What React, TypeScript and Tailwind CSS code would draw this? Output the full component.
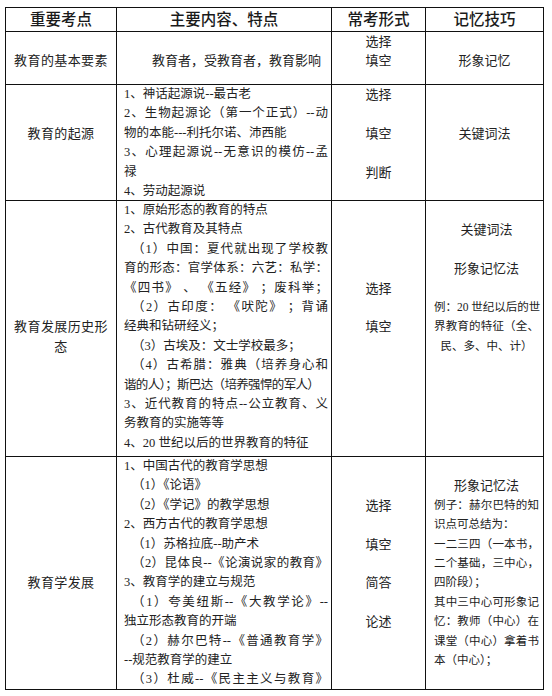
import React from 'react';

type Ln = { t: string; c?: string };
type Item = string | Ln;

const FONT = '"Liberation Serif", "Noto Sans CJK SC", serif';
const LINE = 'h-[19.4px] leading-[19.4px] whitespace-nowrap';
const J = 'text-justify [text-align-last:justify]';
const IN = 'pl-[8px]';
const SM = 'text-[11.5px]';

// one table cell = a stack of fixed-height lines, blanks keep the line grid
function Cell({ lines, className }: { lines: Item[]; className?: string }) {
  return (
    <div className={`border-r border-b border-[#111] overflow-visible ${className ?? ''}`}>
      {lines.map((l, i) => {
        const ln = typeof l === 'string' ? { t: l } : l;
        return (
          <div key={i} className={`${LINE} ${ln.c ?? ''}`}>
            {ln.t || '\u00a0'}
          </div>
        );
      })}
    </div>
  );
}

function Head({ children }: { children: React.ReactNode }) {
  return (
    <div className="flex items-center justify-center border-r border-b border-[#111] text-[15.5px] font-medium text-[#1a1a1a]">
      {children}
    </div>
  );
}

const side = 'text-center text-[13px] tracking-[0.4px]';
const mid = 'text-center text-[13px]';
const body = 'pl-[7px] pr-[3px] text-[12.5px]';
const tip = 'pl-[8px] pr-[4px] text-[13px]';

export default function App() {
  return (
    <div className="min-h-[696px] w-[552px] bg-white pl-[5px] pt-[7px]" style={{ fontFamily: FONT }}>
      <div className="grid w-[539px] grid-cols-[111px_215px_94px_118px] grid-rows-[24px_53px_116px_256px_233px] border-l border-t border-[#111] text-[#222]">
        {/* header */}
        <Head>重要考点</Head>
        <Head>主要内容、特点</Head>
        <Head>常考形式</Head>
        <Head>记忆技巧</Head>

        {/* 基本要素 */}
        <Cell className={side} lines={['', '教育的基本要素']} />
        <Cell className="pl-[35px] text-[13px]" lines={['', '教育者，受教育者，教育影响']} />
        <Cell className={mid} lines={['选择', '填空']} />
        <Cell className={mid} lines={['', '形象记忆']} />

        {/* 起源 */}
        <Cell className={side} lines={['', '', '教育的起源']} />
        <Cell
          className={body}
          lines={[
            '1、神话起源说--最古老',
            { t: '2、生物起源论（第一个正式）--动', c: J },
            '物的本能---利托尔诺、沛西能',
            { t: '3、心理起源说--无意识的模仿--孟', c: J },
            '禄',
            '4、劳动起源说',
          ]}
        />
        <Cell className={mid} lines={['选择', '', '填空', '', '判断']} />
        <Cell className={mid} lines={['', '', '关键词法']} />

        {/* 历史形态 */}
        <Cell className={side} lines={['', '', '', '', '', '', '教育发展历史形', '态']} />
        <Cell
          className={body}
          lines={[
            '1、原始形态的教育的特点',
            '2、古代教育及其特点',
            { t: '（1）中国：夏代就出现了学校教', c: `${IN} ${J}` },
            { t: '育的形态：官学体系：六艺：私学：', c: J },
            { t: '《四书》 、 《五经》 ；废科举；', c: J },
            { t: '（2）古印度： 《吠陀》 ；背诵', c: `${IN} ${J}` },
            '经典和钻研经义；',
            { t: '（3）古埃及：文士学校最多；', c: IN },
            { t: '（4）古希腊：雅典（培养身心和', c: `${IN} ${J}` },
            { t: '谐的人）；斯巴达（培养强悍的军人）', c: 'tracking-[-0.65px]' },
            { t: '3、近代教育的特点--公立教育、义', c: J },
            '务教育的实施等等',
            '4、20 世纪以后的世界教育的特征',
          ]}
        />
        <Cell className={mid} lines={['', '', '', '', '选择', '', '填空']} />
        <Cell
          className={tip}
          lines={[
            '',
            { t: '关键词法', c: 'text-center' },
            '',
            { t: '形象记忆法', c: 'text-center' },
            '',
            { t: '例：20 世纪以后的世', c: `${SM} ${J}` },
            { t: '界教育的特征（全、', c: `${SM} ${J}` },
            { t: '民、多、中、计）', c: `${SM} text-center` },
          ]}
        />

        {/* 教育学发展 */}
        <Cell className={side} lines={['', '', '', '', '', '', '教育学发展']} />
        <Cell
          className={body}
          lines={[
            '1、中国古代的教育学思想',
            { t: '（1）《论语》', c: IN },
            { t: '（2）《学记》的教学思想', c: IN },
            '2、西方古代的教育学思想',
            { t: '（1）苏格拉底--助产术', c: IN },
            { t: '（2）昆体良--《论演说家的教育》', c: `${IN} ${J}` },
            '3、教育学的建立与规范',
            { t: '（1）夸美纽斯--《大教学论》--', c: `${IN} ${J}` },
            '独立形态教育的开端',
            { t: '（2）赫尔巴特--《普通教育学》', c: `${IN} ${J}` },
            '--规范教育学的建立',
            { t: '（3）杜威--《民主主义与教育》', c: `${IN} ${J}` },
          ]}
        />
        <Cell className={mid} lines={['', '', '选择', '', '填空', '', '简答', '', '论述']} />
        <Cell
          className={tip}
          lines={[
            '',
            { t: '形象记忆法', c: 'text-center' },
            { t: '例子：赫尔巴特的知', c: `${SM} ${J}` },
            { t: '识点可总结为：', c: SM },
            { t: '一二三四（一本书，', c: `${SM} ${J}` },
            { t: '二个基础，三中心，', c: `${SM} ${J}` },
            { t: '四阶段）；', c: SM },
            { t: '其中三中心可形象记', c: `${SM} ${J}` },
            { t: '忆：教师（中心）在', c: `${SM} ${J}` },
            { t: '课堂（中心）拿着书', c: `${SM} ${J}` },
            { t: '本（中心）；', c: SM },
          ]}
        />
      </div>
    </div>
  );
}
